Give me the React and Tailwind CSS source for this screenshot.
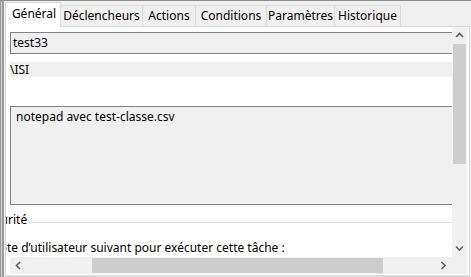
import React from 'react';

const tabs = [
    { label: 'Général', w: 'w-[56px]', active: true },
    { label: 'Déclencheurs', w: 'w-[82px]' },
    { label: 'Actions', w: 'w-[53px]' },
    { label: 'Conditions', w: 'w-[71px]' },
    { label: 'Paramètres', w: 'w-[68px]' },
    { label: 'Historique', w: 'w-[66px]' },
];

const Chevron = ({ dir }) => {
    const pts = {
        up: '1,5 4.5,1.5 8,5',
        down: '1,1.5 4.5,5 8,1.5',
        left: '5,1 1.5,4.5 5,8',
        right: '1.5,1 5,4.5 1.5,8',
    }[dir];
    const vertical = dir === 'up' || dir === 'down';
    return (
        <svg width={vertical ? 9 : 7} height={vertical ? 7 : 9} viewBox={vertical ? '0 0 9 7' : '0 0 7 9'}>
            <polyline points={pts} fill="none" stroke="#606060" strokeWidth="1.6" />
        </svg>
    );
};

// partie tronquée d'une lettre à gauche (défilement horizontal)
const Cut = ({ ch, w }) => (
    <span className={`inline-flex justify-end overflow-hidden ${w}`}>{ch}</span>
);

export default function App() {
    return (
        <div className="w-[471px] h-[277px] overflow-hidden bg-[#f0f0f0] border-t border-[#8c8c8c] flex text-[12px] text-black font-['Noto_Sans',sans-serif]">
            {/* cadre gauche */}
            <div className="flex shrink-0">
                <div className="w-px bg-[#9a9a9a]"></div>
                <div className="w-px bg-[#cfcfcf]"></div>
                <div className="w-[2px] bg-[#9a9a9a]"></div>
                <div className="w-px bg-[#f0f0f0]"></div>
            </div>

            <div className="flex flex-col w-[465px]">
                {/* onglets */}
                <div className="flex items-end h-[25px] shrink-0">
                    {tabs.map(t => (
                        <div
                            key={t.label}
                            className={t.active
                                ? `${t.w} h-[25px] -mb-px relative z-10 bg-white border border-b-0 border-[#d9d9d9] flex items-center justify-center pb-[2px] pl-[2px]`
                                : `${t.w} h-[21px] bg-[#f0f0f0] border border-l-0 border-b-0 border-[#d9d9d9] flex items-center justify-center`}
                        >
                            {t.label}
                        </div>
                    ))}
                </div>

                {/* panneau */}
                <div className="flex-1 bg-white border border-[#d9d9d9] flex flex-col pr-px">
                    <div className="flex h-[230px] shrink-0">
                        <div className="w-[446px] overflow-hidden flex flex-col">
                            <div className="pl-[4px] pt-[5px]">
                                <div className="w-[500px] h-[22px] bg-[#f0f0f0] border border-[#838383] flex items-center pl-[2px]">
                                    test33
                                </div>
                            </div>
                            <div className="pl-[4px] pt-[8px]">
                                <div className="w-[500px] h-[15px] bg-[#f0f0f0] flex items-center leading-none">
                                    \ISI
                                </div>
                            </div>
                            <div className="pl-[4px] pt-[29px]">
                                <div className="w-[500px] h-[99px] bg-[#f0f0f0] border border-[#838383] pl-[5px] pt-[2px] leading-[16px]">
                                    notepad avec test-classe.csv
                                </div>
                            </div>
                            <div className="flex items-center mt-[7px] h-[16px] leading-none">
                                <Cut ch="u" w="w-[2px]" />
                                <span>rité</span>
                                <div className="flex-1 h-px bg-[#dcdcdc] ml-[2px] mt-[4px]"></div>
                            </div>
                            <div className="flex items-center mt-[12px] h-[16px] leading-none whitespace-nowrap">
                                <Cut ch="p" w="w-[1px]" />
                                <span>te d’utilisateur suivant pour exécuter cette tâche :</span>
                            </div>
                        </div>

                        {/* barre verticale */}
                        <div className="w-[15px] bg-[#f0f0f0] flex flex-col">
                            <div className="h-[17px] flex items-center justify-center"><Chevron dir="up" /></div>
                            <div className="h-[120px] mx-px bg-[#cdcdcd]"></div>
                            <div className="flex-1"></div>
                            <div className="h-[17px] flex items-center justify-center"><Chevron dir="down" /></div>
                        </div>
                    </div>

                    {/* barre horizontale */}
                    <div className="flex h-[17px] shrink-0 pl-[4px]">
                        <div className="w-[442px] bg-[#f0f0f0] flex items-center">
                            <div className="w-[17px] flex items-center justify-center"><Chevron dir="left" /></div>
                            <div className="w-[65px]"></div>
                            <div className="w-[291px] h-[15px] bg-[#cdcdcd]"></div>
                            <div className="flex-1"></div>
                            <div className="w-[17px] flex items-center justify-center"><Chevron dir="right" /></div>
                        </div>
                        <div className="w-[15px] bg-[#f0f0f0]"></div>
                    </div>
                    <div className="h-px bg-[#dcdcdc] mt-px"></div>
                </div>
            </div>
        </div>
    );
}
